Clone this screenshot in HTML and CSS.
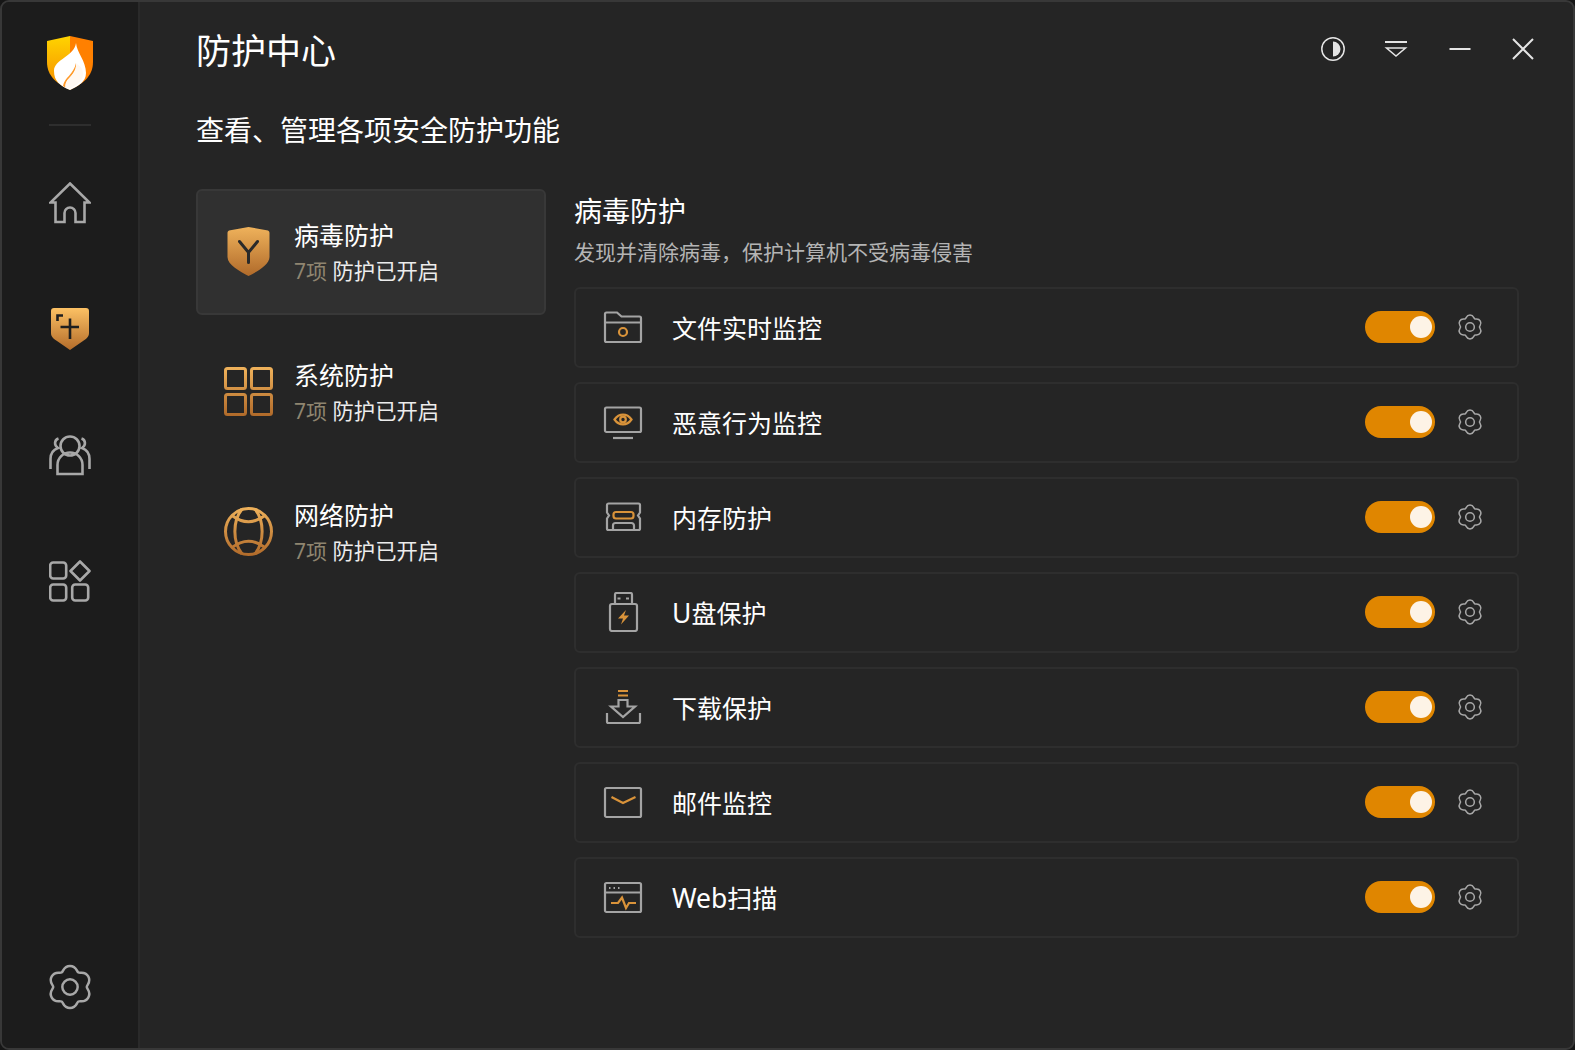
FILE: index.html
```html
<!DOCTYPE html>
<html lang="zh-CN">
<head>
    <meta charset="UTF-8">
    <title>防护中心</title>
    <link rel="stylesheet" href="styles.css">
</head>
<body>
    <svg class="defs" width="0" height="0">
        <defs>
            <linearGradient id="gold" gradientUnits="userSpaceOnUse" x1="0" y1="0" x2="0" y2="49">
                <stop offset="0" stop-color="#efb25b"/>
                <stop offset="1" stop-color="#b06a2a"/>
            </linearGradient>
            <linearGradient id="goldFill" x1="0" y1="0" x2="0" y2="1">
                <stop offset="0" stop-color="#fcc164"/>
                <stop offset="1" stop-color="#b46c2a"/>
            </linearGradient>
            <linearGradient id="logoLeft" x1="0" y1="0" x2="0" y2="1">
                <stop offset="0" stop-color="#ffd400"/>
                <stop offset="1" stop-color="#f58a00"/>
            </linearGradient>
            <symbol id="gear" viewBox="0 0 48 48">
                <path d="M41.500 24C41.500 21.500 46.550 19.060 43.050 13C39.550 6.940 34.920 10.090 32.750 8.840C30.580 7.590 31 2 24 2C17 2 17.420 7.590 15.250 8.840C13.080 10.090 8.450 6.940 4.950 13C1.450 19.060 6.500 21.500 6.500 24C6.500 26.500 1.450 28.940 4.950 35C8.450 41.060 13.080 37.910 15.250 39.160C17.420 40.410 17 46 24 46C31 46 30.580 40.410 32.750 39.160C34.920 37.910 39.550 41.060 43.050 35C46.550 28.940 41.500 26.500 41.500 24Z"/>
                <circle cx="24" cy="24" r="8"/>
            </symbol>
        </defs>
    </svg>

    <div class="window">
        <div class="sidebar">
            <svg class="logo" width="46" height="54" viewBox="0 0 46 54">
                <path d="M23 0V54C11 48 0 41 0 26V5Z" fill="url(#logoLeft)"/>
                <path d="M23 0L46 5V26C46 41 35 48 23 54Z" fill="#ff8000"/>
                <path d="M29 7C30 17 39 25 39 37C39 46 31 50 23 54C13 50 7 45 7 35C7 23 27 21 29 7Z" fill="#fff"/>
                <path d="M16 50C17 42 27 38 29 27C30 35 24 40 20.500 44C19 46 18 49 18.500 51.500Z" fill="#ff9a2a"/>
                <path d="M29 27C32 30 36 31 36 38C36 45 30 49 23 52.500C20 52 19 52 18.500 51.500C18 49 19 46 20.500 44C24 40 30 35 29 27Z" fill="#fff8f2"/>
            </svg>
            <div class="side-divider"></div>
            <div class="nav">
                <div class="nav-item">
                    <svg class="line-icon" width="42" height="42" viewBox="0 0 42 42">
                        <path d="M21 1.500L40.500 20.500H35.500V40H26.500V31A5.500 5.500 0 0 0 15.500 31V40H6.500V20.500H1.500Z"/>
                    </svg>
                </div>
                <div class="nav-item">
                    <svg width="38" height="42" viewBox="0 0 38 42">
                        <path d="M3 0H35A3 3 0 0 1 38 3V25C38 29 35 31 32 33L19 42L6 33C3 31 0 29 0 25V3A3 3 0 0 1 3 0Z" fill="url(#goldFill)"/>
                        <path d="M9.500 19H28M19 10.500V31M6.500 13V7.500H12" fill="none" stroke="#1f1f1f" stroke-width="2.600"/>
                    </svg>
                </div>
                <div class="nav-item">
                    <svg class="line-icon" width="42" height="42" viewBox="0 0 42 42">
                        <circle cx="21" cy="12" r="9.500"/>
                        <path d="M8.500 40V31A12.500 12.500 0 0 1 33.500 31V40Z"/>
                        <path d="M9.500 4.500C5 6 5 11.500 9 14C3.500 16 1.500 21 1.500 25V35M32.500 4.500C37 6 37 11.500 33 14C38.500 16 40.500 21 40.500 25V35"/>
                    </svg>
                </div>
                <div class="nav-item">
                    <svg class="line-icon" width="42" height="42" viewBox="0 -1 42 42">
                        <rect x="1.200" y="1.500" width="16" height="16" rx="3"/>
                        <rect x="1.200" y="23.500" width="16" height="16" rx="3"/>
                        <rect x="23.200" y="23.500" width="16" height="16" rx="3"/>
                        <path d="M31 .5L40.500 10L31 19.500L21.500 10Z" stroke-linejoin="round"/>
                    </svg>
                </div>
            </div>
            <svg class="line-icon side-gear" width="46" height="46"><use href="#gear"/></svg>
        </div>

        <div class="main">
            <div class="header">
                <h1>防护中心</h1>
                <div class="win-controls">
                    <svg width="24" height="24" viewBox="0 0 24 24">
                        <circle cx="12" cy="12" r="11.200" fill="none" stroke="#e4e4e4" stroke-width="1.500"/>
                        <path d="M12 4.500A7.500 7.500 0 0 1 12 19.500Z" fill="#e4e4e4"/>
                    </svg>
                    <svg width="24" height="24" viewBox="0 0 24 24">
                        <path d="M1 5H23" stroke="#e4e4e4" stroke-width="2.200"/>
                        <path d="M2.500 11H21.500L12 19Z" fill="none" stroke="#e4e4e4" stroke-width="1.500"/>
                    </svg>
                    <svg width="24" height="24" viewBox="0 0 24 24">
                        <path d="M1.500 12H22.500" stroke="#e4e4e4" stroke-width="2"/>
                    </svg>
                    <svg width="24" height="24" viewBox="0 0 24 24">
                        <path d="M2 2L22 22M22 2L2 22" stroke="#e4e4e4" stroke-width="2"/>
                    </svg>
                </div>
            </div>
            <div class="subtitle">查看、管理各项安全防护功能</div>

            <div class="columns">
                <div class="categories">
                    <div class="category active">
                        <svg class="cat-icon" width="49" height="49" viewBox="0 0 49 49">
                            <path d="M24.500 0L44 3.500A2.500 2.500 0 0 1 45.500 6V30C45.500 38 33 44.500 24.500 49C16 44.500 3.500 38 3.500 30V6A2.500 2.500 0 0 1 5 3.500Z" fill="url(#gold)"/>
                            <path d="M15.500 14.500L24.500 25.500L33.500 14.500M24.500 25.500V35.500" fill="none" stroke="#2a2a2a" stroke-width="3" stroke-linecap="round"/>
                        </svg>
                        <div class="cat-text">
                            <div class="cat-name">病毒防护</div>
                            <div class="cat-status"><span class="count">7项</span> 防护已开启</div>
                        </div>
                    </div>
                    <div class="category">
                        <svg class="cat-icon" width="49" height="49" viewBox="0 0 49 49" fill="none" stroke="url(#gold)" stroke-width="3">
                            <rect x="1.500" y="1.500" width="20" height="20" rx="2"/>
                            <rect x="27.500" y="1.500" width="20" height="20" rx="2"/>
                            <rect x="1.500" y="27.500" width="20" height="20" rx="2"/>
                            <rect x="27.500" y="27.500" width="20" height="20" rx="2"/>
                        </svg>
                        <div class="cat-text">
                            <div class="cat-name">系统防护</div>
                            <div class="cat-status"><span class="count">7项</span> 防护已开启</div>
                        </div>
                    </div>
                    <div class="category">
                        <svg class="cat-icon" width="49" height="49" viewBox="0 0 49 49" fill="none" stroke="url(#gold)" stroke-width="3">
                            <circle cx="24.500" cy="24.500" r="23"/>
                            <path d="M8 8.500Q24.500 21 41 8.500M8 40.500Q24.500 28 41 40.500"/>
                            <path d="M18 2C8.500 14 8.500 35 18 47M31 2C40.500 14 40.500 35 31 47"/>
                        </svg>
                        <div class="cat-text">
                            <div class="cat-name">网络防护</div>
                            <div class="cat-status"><span class="count">7项</span> 防护已开启</div>
                        </div>
                    </div>
                </div>

                <div class="detail">
                    <h2>病毒防护</h2>
                    <p class="desc">发现并清除病毒，保护计算机不受病毒侵害</p>
                    <div class="rows">
                        <div class="row">
                            <svg class="row-icon" width="40" height="40" viewBox="0 0 40 40">
                                <path d="M2 7A1.500 1.500 0 0 1 3.500 5.500H14L18.500 9.500H36.500A1.500 1.500 0 0 1 38 11V33.500A1.500 1.500 0 0 1 36.500 35H3.500A1.500 1.500 0 0 1 2 33.500ZM2 15.500H38"/>
                                <circle class="accent" cx="20" cy="25" r="4"/>
                            </svg>
                            <span class="row-label">文件实时监控</span>
                            <div class="toggle"><div class="knob"></div></div>
                            <svg class="line-icon row-gear" width="26" height="26"><use href="#gear"/></svg>
                        </div>
                        <div class="row">
                            <svg class="row-icon" width="40" height="40" viewBox="0 0 40 40">
                                <rect x="2" y="5.500" width="36" height="24.500" rx="1.500"/>
                                <path d="M10 36H30"/>
                                <path class="accent" d="M11.500 17.500C16 11 24 11 28.500 17.500C24 24 16 24 11.500 17.500Z"/>
                                <circle class="accent" cx="20" cy="17.500" r="2.800"/>
                            </svg>
                            <span class="row-label">恶意行为监控</span>
                            <div class="toggle"><div class="knob"></div></div>
                            <svg class="line-icon row-gear" width="26" height="26"><use href="#gear"/></svg>
                        </div>
                        <div class="row">
                            <svg class="row-icon" width="40" height="40" viewBox="0 0 40 40">
                                <path d="M5.500 6.500H35.500A1.500 1.500 0 0 1 37 8V15.500L35 18.500L37 21.500V31.500A1.500 1.500 0 0 1 35.500 33H5.500A1.500 1.500 0 0 1 4 31.500V21.500L6 18.500L4 15.500V8A1.500 1.500 0 0 1 5.500 6.500Z"/>
                                <path d="M10 33V28.500A2.500 2.500 0 0 1 12.500 26H28.500A2.500 2.500 0 0 1 31 28.500V33"/>
                                <rect class="accent" x="10.500" y="15" width="20" height="6.500" rx="2.500"/>
                            </svg>
                            <span class="row-label">内存防护</span>
                            <div class="toggle"><div class="knob"></div></div>
                            <svg class="line-icon row-gear" width="26" height="26"><use href="#gear"/></svg>
                        </div>
                        <div class="row">
                            <svg class="row-icon" width="40" height="40" viewBox="0 0 40 40">
                                <path d="M12 12V2.500A1.500 1.500 0 0 1 13.500 1H27.500A1.500 1.500 0 0 1 29 2.500V12"/>
                                <rect x="7" y="12" width="27" height="27" rx="2"/>
                                <path d="M14.500 6.500H17.500M23 6.500H26"/>
                                <path class="accent-fill" d="M23 18L15 26.500H20L18 32.500L26 23.500H21Z"/>
                            </svg>
                            <span class="row-label"><span class="latin">U</span>盘保护</span>
                            <div class="toggle"><div class="knob"></div></div>
                            <svg class="line-icon row-gear" width="26" height="26"><use href="#gear"/></svg>
                        </div>
                        <div class="row">
                            <svg class="row-icon" width="40" height="40" viewBox="0 0 40 40">
                                <path class="accent" d="M15 4H25M15 8.500H25"/>
                                <path d="M15.500 13H24.500V19.500H32L20 30L8 19.500H15.500Z"/>
                                <path d="M4 26V34.500A1.500 1.500 0 0 0 5.500 36H35.500A1.500 1.500 0 0 0 37 34.500V26"/>
                            </svg>
                            <span class="row-label">下载保护</span>
                            <div class="toggle"><div class="knob"></div></div>
                            <svg class="line-icon row-gear" width="26" height="26"><use href="#gear"/></svg>
                        </div>
                        <div class="row">
                            <svg class="row-icon" width="40" height="40" viewBox="0 0 40 40">
                                <rect x="2" y="6" width="36" height="29" rx="1.500"/>
                                <path class="accent" d="M8.500 15L20 21L32.500 15"/>
                            </svg>
                            <span class="row-label">邮件监控</span>
                            <div class="toggle"><div class="knob"></div></div>
                            <svg class="line-icon row-gear" width="26" height="26"><use href="#gear"/></svg>
                        </div>
                        <div class="row">
                            <svg class="row-icon" width="40" height="40" viewBox="0 0 40 40">
                                <rect x="2" y="6" width="36" height="29" rx="1.500"/>
                                <path d="M2 15.500H38"/>
                                <path d="M6 11H7.500M10.500 11H12M15 11H16.500"/>
                                <path class="accent" d="M8 26H15L19 20.500L23 31L26 26H33"/>
                            </svg>
                            <span class="row-label"><span class="latin">Web</span>扫描</span>
                            <div class="toggle"><div class="knob"></div></div>
                            <svg class="line-icon row-gear" width="26" height="26"><use href="#gear"/></svg>
                        </div>
                    </div>
                </div>
            </div>
        </div>
    </div>
</body>
</html>
```

FILE: styles.css
```css
html, body {
    margin: 0;
    padding: 0;
    background-color: #161616;
}

body {
    font-family: "Noto Sans", "Noto Sans CJK SC", sans-serif;
    color: white;
    overflow: hidden;
}

.defs {
    position: absolute;
}

svg {
    display: block;
    flex-shrink: 0;
}

.window {
    display: flex;
    box-sizing: border-box;
    width: 1575px;
    height: 1050px;
    border: 2px solid #383838;
    border-radius: 9px;
    overflow: hidden;
    background-color: #252525;
}

/* left icon bar */
.sidebar {
    display: flex;
    flex-direction: column;
    align-items: center;
    box-sizing: border-box;
    width: 138px;
    padding: 34px 0 38px;
    background-color: #1c1c1c;
    border-right: 2px solid #2a2a2a;
}

.logo {
    margin-bottom: 34px;
}

.side-divider {
    width: 42px;
    height: 2px;
    background-color: #2e2e2e;
}

.nav {
    margin-top: 14px;
}

.nav-item {
    display: flex;
    align-items: center;
    justify-content: center;
    height: 126px;
}

.line-icon {
    fill: none;
    stroke: #a8a8a8;
    stroke-width: 2.6;
}

.side-gear {
    margin-top: auto;
}

/* main area */
.main {
    flex-grow: 1;
    padding-left: 56px;
}

.header {
    display: flex;
    justify-content: space-between;
    align-items: center;
    height: 94px;
    padding-right: 38px;
}

.header h1 {
    margin: 0;
    padding-top: 4px;
    font-size: 35px;
    font-weight: 400;
    line-height: 50px;
}

.win-controls {
    display: flex;
    gap: 39.5px;
}

.subtitle {
    margin: 14px 0 39px;
    font-size: 28px;
    line-height: 40px;
}

.columns {
    display: flex;
    gap: 28px;
}

.categories {
    display: flex;
    flex-direction: column;
    gap: 14px;
    width: 350px;
}

.category {
    display: flex;
    align-items: center;
    gap: 21px;
    box-sizing: border-box;
    height: 126px;
    padding-left: 26px;
    border: 2px solid transparent;
    border-radius: 6px;
}

.category.active {
    background-color: #303030;
    border-color: #383838;
}

.cat-icon {
    margin-bottom: 2px;
}

.cat-text {
    padding-top: 4px;
}

.cat-name {
    font-size: 25px;
    line-height: 33px;
}

.cat-status {
    margin-top: 1px;
    font-size: 21.3px;
    line-height: 35px;
    color: #ececec;
}

.count {
    font-size: 21px;
    color: #8f8570;
}

.detail {
    width: 945px;
    padding-top: 2px;
}

.detail h2 {
    margin: 0;
    font-size: 28px;
    font-weight: 400;
    line-height: 40px;
}

.desc {
    margin: 6px 0 20px;
    font-size: 21px;
    line-height: 30px;
    color: #b4b4b4;
}

.rows {
    display: flex;
    flex-direction: column;
    gap: 14px;
}

.row {
    display: flex;
    align-items: center;
    box-sizing: border-box;
    height: 81px;
    padding: 0 34px 1px 27px;
    border: 2px solid #2e2e2e;
    border-radius: 6px;
}

.row-icon {
    fill: none;
    stroke: #a4a4a4;
    stroke-width: 2.2;
}

.row-icon .accent {
    stroke: #d9933a;
}

.row-icon .accent-fill {
    fill: #d9933a;
    stroke: none;
}

.row-label {
    flex-grow: 1;
    margin-left: 29px;
    padding-top: 2px;
    font-size: 25px;
    line-height: 36px;
}

.latin {
    font-size: 26.500px;
}

.toggle {
    display: flex;
    align-items: center;
    justify-content: flex-end;
    box-sizing: border-box;
    width: 70px;
    height: 32px;
    padding-right: 3px;
    border-radius: 16px;
    background-color: #e08600;
}

.knob {
    width: 22px;
    height: 22px;
    border-radius: 50%;
    background-color: #fdf3e6;
}

.row-gear {
    margin-left: 22px;
    stroke-width: 2.8;
}
```
